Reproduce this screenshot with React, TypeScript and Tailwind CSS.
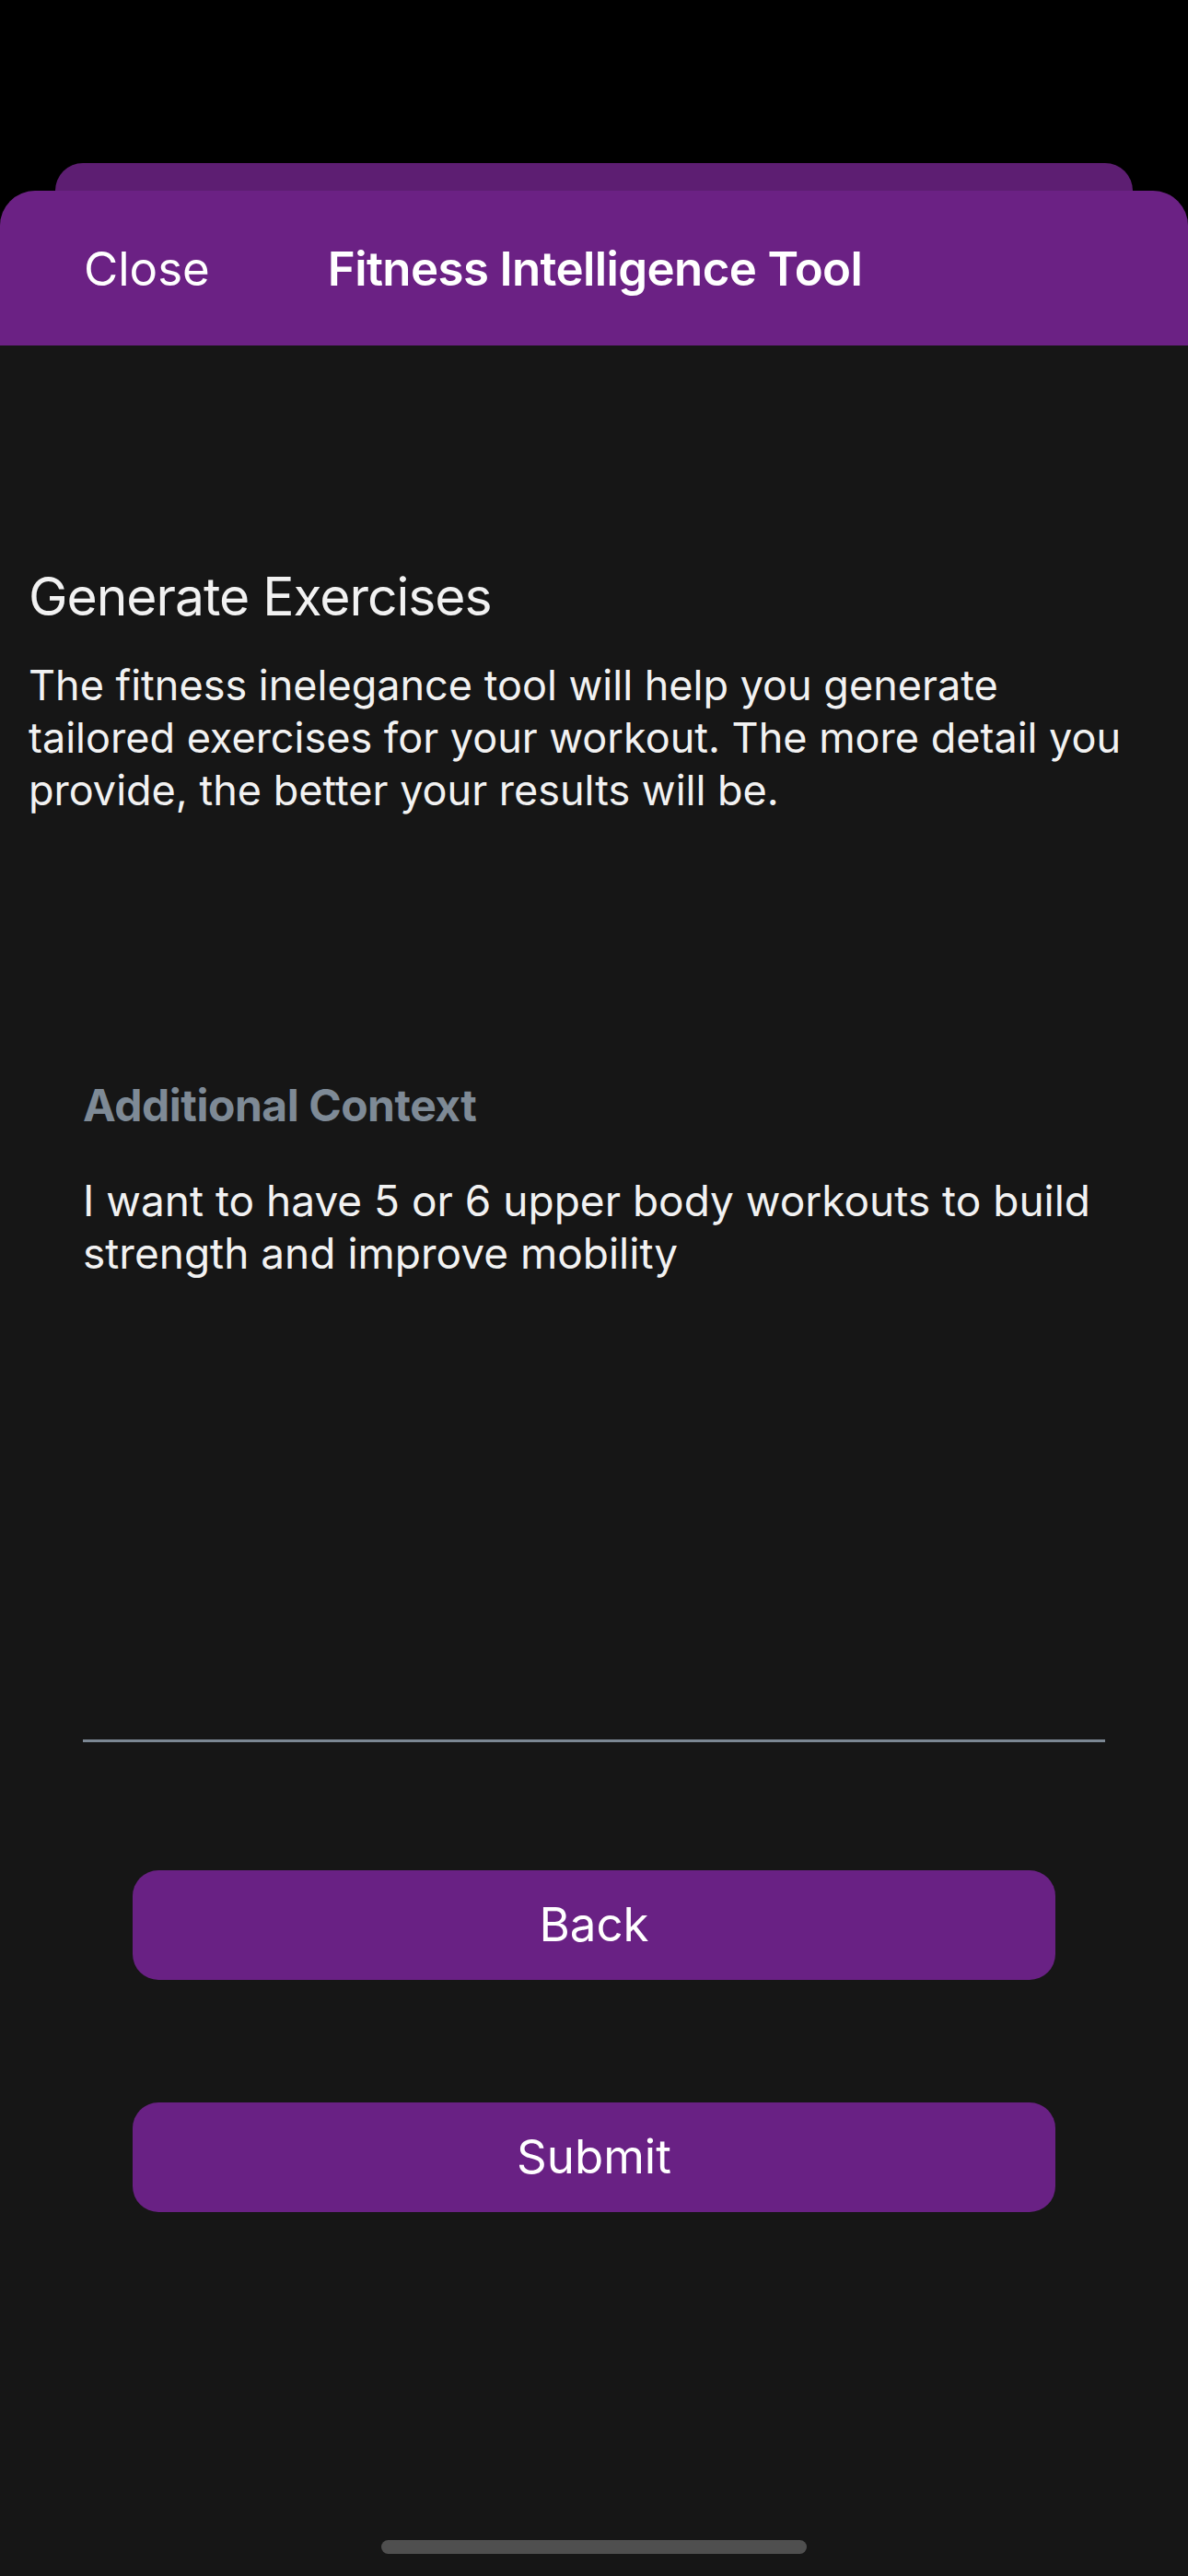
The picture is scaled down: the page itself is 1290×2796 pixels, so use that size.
const font = { fontFamily: "Inter, 'Noto Sans', sans-serif" };

const App = () => {
  return (
    <div
      className="h-[2796px] w-full bg-black flex flex-col overflow-hidden"
      style={font}
    >
      <div className="h-[177px] shrink-0" />
      {/* sheet behind */}
      <div className="h-[30px] shrink-0 mx-[60px] rounded-t-[34px] bg-[#5d1e72]" />

      {/* main sheet */}
      <div className="flex-1 flex flex-col rounded-t-[38px] overflow-hidden bg-[#161616]">
        <div className="h-[168px] shrink-0 flex items-center bg-[#6b2184] text-white">
          <button className="ml-[91px] text-[51px] leading-none font-normal">Close</button>
          <h1 className="ml-[128px] text-[51px] leading-none font-semibold tracking-[-0.012em]">
            Fitness Intelligence Tool
          </h1>
        </div>

        <div className="pl-[31px] pr-[46px] pt-[239px] text-[#f2f2f2]">
          <h2 className="text-[57px] leading-[68px] font-normal tracking-[-0.018em]">
            Generate Exercises
          </h2>
          <p className="mt-[33px] text-[45px] leading-[57px]">
            The fitness inelegance tool will help you generate tailored exercises for your
            workout. The more detail you provide, the better your results will be.
          </p>
        </div>

        <div className="px-[90px] mt-[285px]">
          <label className="block text-[48px] leading-[58px] font-bold text-[#7e8a96] tracking-[-0.01em]">
            Additional Context
          </label>
          <div className="mt-[46px] h-[616px] border-b-[3px] border-[#7b8793] text-[46px] leading-[57px] text-[#f2f2f2]">
            I want to have 5 or 6 upper body workouts to build strength and improve mobility
          </div>
        </div>

        <div className="flex flex-col gap-[133px] px-[144px] mt-[139px]">
          <button className="h-[119px] rounded-[28px] bg-[#692184] text-white text-[51px]">
            Back
          </button>
          <button className="h-[119px] rounded-[28px] bg-[#692184] text-white text-[51px]">
            Submit
          </button>
        </div>

        <div className="mt-auto mb-[24px] self-center w-[462px] h-[15px] rounded-full bg-[#4f4f4f]" />
      </div>
    </div>
  );
};

export default App;
